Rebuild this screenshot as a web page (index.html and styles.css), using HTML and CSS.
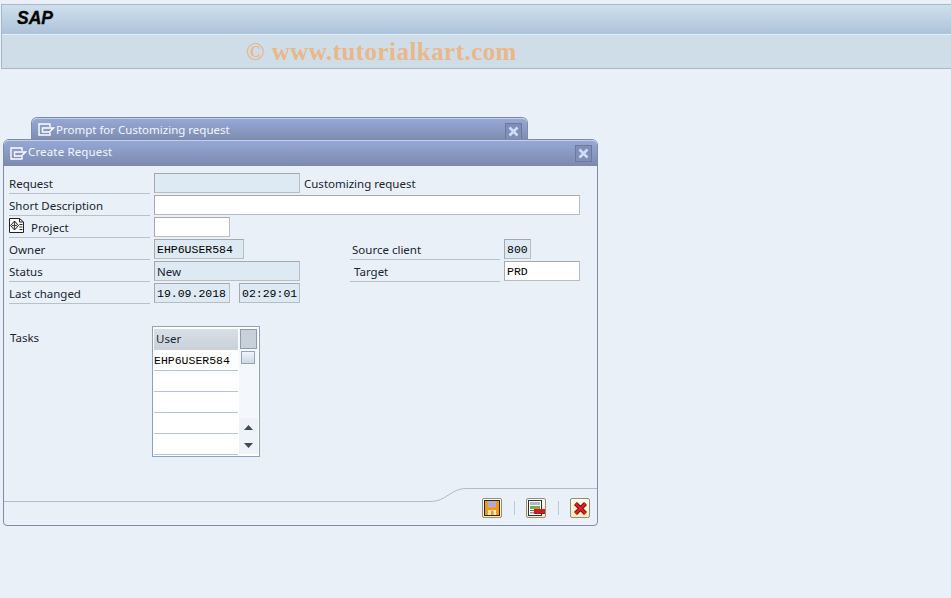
FILE: index.html
```html
<!DOCTYPE html>
<html lang="en">
<head>
<meta charset="utf-8">
<title>Create Request</title>
<link rel="stylesheet" href="styles.css">
</head>
<body>
<header class="shell">
  <div class="titlebar"><span class="sap">SAP</span></div>
  <div class="toolbar"><span class="watermark">© www.tutorialkart.com</span></div>
</header>

<section class="window back-window">
  <div class="win-title">
    <svg class="win-icon" width="17" height="13" viewBox="0 0 17 13"><path d="M12 4V1H1V12H12V9.5" fill="none" stroke="#fff" stroke-width="1.4"/><path d="M4.5 5H15.5L11.5 9H4.5Z" fill="none" stroke="#fff" stroke-width="1.4"/></svg>
    <span class="win-text">Prompt for Customizing request</span>
    <span class="win-close"><svg width="11" height="11" viewBox="0 0 11 11"><path d="M1.5 1.5L9.5 9.5M9.5 1.5L1.5 9.5" stroke="#cfdcff" stroke-width="2.6"/></svg></span>
  </div>
</section>

<section class="window front-window">
  <div class="win-title">
    <svg class="win-icon" width="17" height="13" viewBox="0 0 17 13"><path d="M12 4V1H1V12H12V9.5" fill="none" stroke="#fff" stroke-width="1.4"/><path d="M4.5 5H15.5L11.5 9H4.5Z" fill="none" stroke="#fff" stroke-width="1.4"/></svg>
    <span class="win-text">Create Request</span>
    <span class="win-close"><svg width="11" height="11" viewBox="0 0 11 11"><path d="M1.5 1.5L9.5 9.5M9.5 1.5L1.5 9.5" stroke="#cfdcff" stroke-width="2.6"/></svg></span>
  </div>

  <div class="form">
    <div class="row">
      <label class="label">Request</label>
      <span class="field ro w-wide"></span>
      <span class="after">Customizing request</span>
    </div>
    <div class="row">
      <label class="label">Short Description</label>
      <span class="field edit w-full"></span>
    </div>
    <div class="row">
      <label class="label label-icon">
        <svg width="15" height="15" viewBox="0 0 15 15"><path d="M.5 .5H10.5L14.5 4V14.5H.5Z" fill="#fff" stroke="#222"/><path d="M10.5 .5V4H14.5" fill="none" stroke="#222"/><path d="M5.5 3L9.5 7.5L5.5 12L1.5 7.5Z" fill="#e4e4e4" stroke="#222"/><path d="M5.5 3V12M3 7.5H8" stroke="#222" stroke-width=".8"/><path d="M10.5 6.5H13.5M10.5 9H13.5M10.5 11.5H13.5" stroke="#222"/></svg>
        <span>Project</span>
      </label>
      <span class="field edit w-date"></span>
    </div>
    <div class="row">
      <div class="left">
        <label class="label">Owner</label>
        <span class="field ro mono w-owner">EHP6USER584</span>
      </div>
      <label class="label label-right">Source client</label>
      <span class="field ro mono w-client">800</span>
    </div>
    <div class="row">
      <div class="left">
        <label class="label">Status</label>
        <span class="field ro w-wide">New</span>
      </div>
      <label class="label label-right label-target">Target</label>
      <span class="field edit mono w-target">PRD</span>
    </div>
    <div class="row">
      <label class="label">Last changed</label>
      <span class="field ro mono w-date">19.09.2018</span>
      <span class="field ro mono w-time">02:29:01</span>
    </div>
  </div>

  <div class="tasks">
    <span class="tasks-label">Tasks</span>
    <div class="table">
      <div class="cols">
        <div class="col-user">
          <div class="th">User</div>
          <div class="td mono">EHP6USER584</div>
          <div class="td"></div>
          <div class="td"></div>
          <div class="td"></div>
          <div class="td"></div>
        </div>
        <div class="scroll">
          <div class="corner"></div>
          <div class="track"><div class="thumb"></div></div>
          <div class="arrow"><svg width="9" height="5" viewBox="0 0 9 5"><path d="M4.5 0L9 5H0Z" fill="#3f4a57"/></svg></div>
          <div class="arrow"><svg width="9" height="5" viewBox="0 0 9 5"><path d="M0 0H9L4.5 5Z" fill="#3f4a57"/></svg></div>
        </div>
      </div>
    </div>
  </div>

  <footer class="win-footer">
    <svg class="footer-line" width="593" height="15" viewBox="0 0 593 15"><path d="M0 13.5H427C442 13.5 447 .5 462 .5H593" fill="none" stroke="#aebccb"/></svg>
    <button class="tool" type="button" aria-label="Save">
      <svg width="16" height="16" viewBox="0 0 16 16"><rect x=".5" y=".5" width="15" height="15" fill="#f0971c" stroke="#2e2412"/><rect x="4" y="1" width="8" height="6.5" fill="#b9a9c9"/><rect x="4" y="10" width="8" height="5" fill="#ffe9b0"/><rect x="7" y="10.5" width="2.5" height="4.5" fill="#f0971c"/></svg>
    </button>
    <span class="sep"></span>
    <button class="tool" type="button" aria-label="Save and remove">
      <svg width="17" height="16" viewBox="0 0 17 16"><rect x=".5" y=".5" width="13" height="15" fill="#fff" stroke="#2e3338"/><rect x="2" y="2" width="10" height="3" fill="#aeb9c6"/><rect x="2" y="6" width="10" height="3" fill="#7fae3c"/><path d="M2 10.5H7M2 12.8H7" stroke="#667"/><rect x="6" y="9" width="11" height="4" fill="#e0141e"/><path d="M6 13.5H17" stroke="#500" stroke-width=".8"/></svg>
    </button>
    <span class="sep"></span>
    <button class="tool" type="button" aria-label="Cancel">
      <svg width="15" height="15" viewBox="0 0 15 15"><path d="M2.5 2.5L12.5 12.5M12.5 2.5L2.5 12.5" stroke="#5a1010" stroke-width="4.2"/><path d="M2.5 2.5L12.5 12.5M12.5 2.5L2.5 12.5" stroke="#ea1c24" stroke-width="2.4"/></svg>
    </button>
  </footer>
</section>
</body>
</html>
```
FILE: styles.css
```css
* { box-sizing: border-box; }
html, body { height: 100%; }
body {
  margin: 0;
  padding-top: 4px;
  padding-left: 1px;
  background: #e9f0f7;
  font-family: "Noto Sans", "Open Sans", sans-serif;
  font-size: 11.5px;
  color: #1a2533;
  overflow: hidden;
}
.shell { border: 1px solid #a9b8c9; border-right: 0; background: #cfdde8; }
.titlebar {
  height: 30px;
  padding-left: 15px;
  background: linear-gradient(#cfe0ec, #adc3da);
  border-bottom: 1px solid #e6eff7;
  display: flex;
  align-items: center;
}
.sap {
  font: italic bold 17.5px "Liberation Sans", sans-serif;
  color: #000;
  -webkit-text-stroke: .3px #000;
  position: relative;
  top: -1px;
}
.toolbar {
  height: 33px;
  background: #cfdde8;
  padding-left: 244px;
  display: flex;
  align-items: center;
}
.watermark {
  font: bold 25px "Liberation Serif", serif;
  letter-spacing: .45px;
  color: #e9b88a;
  white-space: nowrap;
}

.window {
  position: absolute;
  border: 1px solid #7f8ca6;
  border-radius: 6px 6px 4px 4px;
  background: #e9f0f7;
}
.back-window { left: 31px; top: 117px; width: 497px; height: 40px; border-bottom: 0; }
.front-window { left: 3px; top: 139px; width: 595px; height: 387px; display: flex; flex-direction: column; }
.win-title {
  height: 26px;
  border-radius: 5px 5px 0 0;
  border-top: 1px solid #c1cdea;
  background: linear-gradient(#95a8d6, #7b89ad);
  display: flex;
  align-items: center;
  padding: 0 5px 0 6px;
}
.back-window .win-title { height: 24px; align-items: flex-start; padding-top: 4px; }
.win-icon { flex: none; }
.win-text { margin-left: 1px; flex: 1; color: #f2f6ff; white-space: nowrap; position: relative; top: -1px; }
.front-window .win-text { top: -2px; letter-spacing: .15px; }
.win-close {
  width: 17px;
  height: 17px;
  background: #7f8fb7;
  border: 1px solid #6c7a9f;
  display: flex;
  align-items: center;
  justify-content: center;
}

.form { padding: 7px 0 0 5px; }
.row { display: flex; height: 22px; }
.left { display: flex; width: 341px; }
.label {
  width: 141px;
  height: 21px;
  border-bottom: 1px solid #b7c2cc;
  padding: 3px 0 0 0;
  margin-right: 4px;
  white-space: nowrap;
  flex: none;
}
.label-icon { display: flex; align-items: flex-start; padding: 1px 0 0 0; }
.label-icon svg { flex: none; }
.label-icon span { margin-left: 7px; padding-top: 2px; }
.label-right { width: 150px; padding-left: 2px; }
.label-target { padding-left: 4px; }
.field {
  height: 20px;
  flex: none;
  border: 1px solid #a5a9ad;
  border-right-color: #b9bdc1;
  border-bottom-color: #b9bdc1;
  padding: 2px 0 0 2px;
  white-space: nowrap;
}
.ro { background: #dde9f3; }
.edit { background: #fff; }
.mono { font: 11.5px/15px "Liberation Mono", monospace; color: #000; }
.w-wide { width: 146px; }
.w-full { width: 426px; }
.w-date { width: 76px; }
.w-owner { width: 90px; }
.w-time { width: 61px; margin-left: 9px; }
.w-client { width: 27px; }
.w-target { width: 76px; }
.after { margin-left: 4px; padding-top: 3px; }

.tasks { display: flex; padding: 21px 0 0 6px; }
.tasks-label { width: 142px; padding-top: 4px; }
.table {
  width: 108px;
  height: 131px;
  border: 1px solid #8aa3c0;
  padding: 2px 1px 2px 1px;
  background: #fff;
}
.cols { display: flex; height: 100%; }
.col-user { width: 85px; }
.th {
  height: 21px;
  background: linear-gradient(#d9dfe5, #c8d0d9);
  padding: 2px 0 0 2px;
}
.td { height: 21px; border-bottom: 1px solid #b7c4d2; background: #fff; padding: 3px 0 0 0; }
.scroll { width: 19px; margin-left: 1px; display: flex; flex-direction: column; background: #f4f7fb; }
.corner { height: 20px; background: #c8d0d9; border: 1px solid #929ca8; flex: none; margin: 0 1px 0 1px; }
.track { flex: 1; padding: 2px 2px 0 2px; background: #f4f7fb; }
.thumb { width: 14px; height: 13px; background: linear-gradient(#f2f6fa, #c9d7e6); border: 1px solid #98a4b2; }
.arrow { height: 18px; flex: none; display: flex; align-items: center; justify-content: center; background: #eef3f8; }

.win-footer {
  margin-top: auto;
  position: relative;
  height: 39px;
  display: flex;
  justify-content: flex-end;
  align-items: flex-start;
  padding: 12px 7px 0 0;
}
.footer-line { position: absolute; left: 0; top: 2px; }
.tool {
  width: 20px;
  height: 20px;
  padding: 0;
  border: 1px solid #8f8f80;
  border-radius: 2px;
  background: linear-gradient(#fffdf0, #fbeab6);
  display: flex;
  align-items: center;
  justify-content: center;
}
.sep { width: 1px; height: 14px; margin: 3px 11px 0 12px; background: #b5cbe0; }
```
